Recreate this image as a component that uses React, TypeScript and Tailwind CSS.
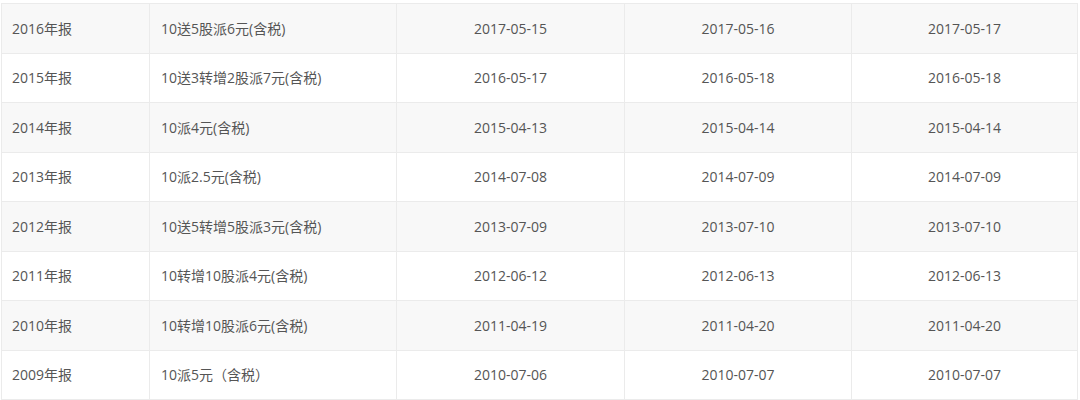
const rows = [
  ["2016年报", "10送5股派6元(含税)", "2017-05-15", "2017-05-16", "2017-05-17"],
  ["2015年报", "10送3转增2股派7元(含税)", "2016-05-17", "2016-05-18", "2016-05-18"],
  ["2014年报", "10派4元(含税)", "2015-04-13", "2015-04-14", "2015-04-14"],
  ["2013年报", "10派2.5元(含税)", "2014-07-08", "2014-07-09", "2014-07-09"],
  ["2012年报", "10送5转增5股派3元(含税)", "2013-07-09", "2013-07-10", "2013-07-10"],
  ["2011年报", "10转增10股派4元(含税)", "2012-06-12", "2012-06-13", "2012-06-13"],
  ["2010年报", "10转增10股派6元(含税)", "2011-04-19", "2011-04-20", "2011-04-20"],
  ["2009年报", "10派5元（含税）", "2010-07-06", "2010-07-07", "2010-07-07"],
];

export default function App() {
  return (
    <div
      className="w-[1080px] h-[400px] bg-white pt-[3px] pl-px overflow-hidden text-[14px] text-[#555]"
      style={{ fontFamily: '"Open Sans", "Noto Sans CJK SC", sans-serif' }}
    >
      <div className="w-[1077px] border-t border-l border-r border-[#ebebeb]">
        {rows.map((r, i) => (
          <div
            key={r[0]}
            className={
              "grid grid-cols-[148px_247px_228px_227px_225px] h-[49.5px] border-b border-[#ebebeb] " +
              (i % 2 === 0 ? "bg-[#f8f8f8]" : "bg-white")
            }
          >
            <div className="flex items-center pl-[10px] border-r border-[#ebebeb]">{r[0]}</div>
            <div className="flex items-center pl-[11px] border-r border-[#ebebeb]">{r[1]}</div>
            <div className="flex items-center justify-center border-r border-[#ebebeb]">{r[2]}</div>
            <div className="flex items-center justify-center border-r border-[#ebebeb]">{r[3]}</div>
            <div className="flex items-center justify-center">{r[4]}</div>
          </div>
        ))}
      </div>
    </div>
  );
}
